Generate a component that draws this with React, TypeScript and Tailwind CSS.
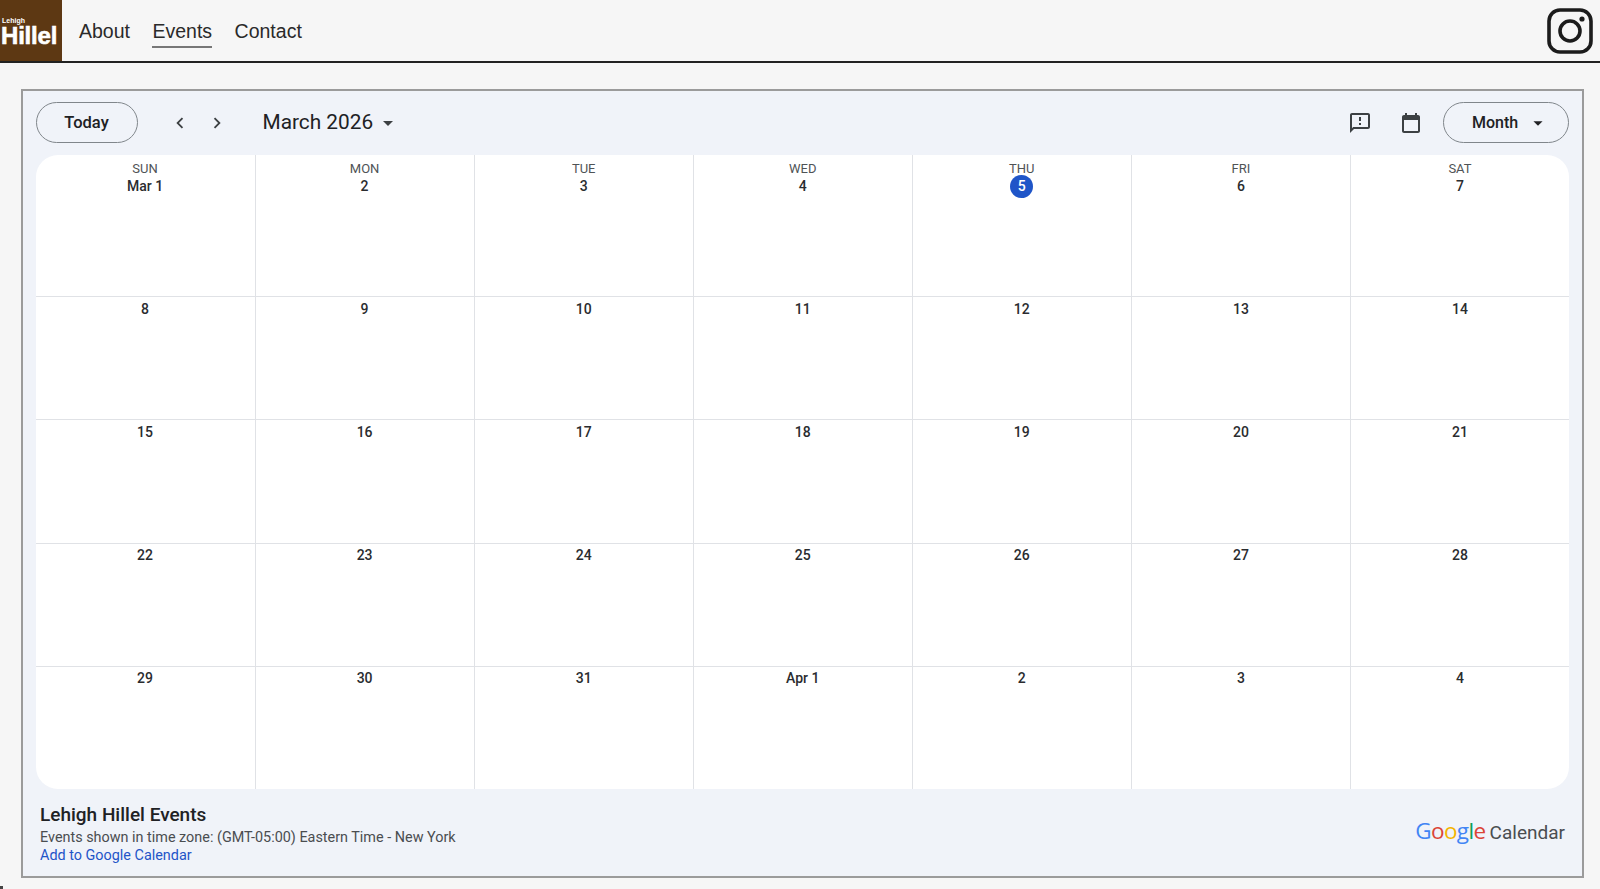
const sans = "font-['Roboto','Noto_Sans',sans-serif]";

const rows = [
  ["Mar 1", "2", "3", "4", "5", "6", "7"],
  ["8", "9", "10", "11", "12", "13", "14"],
  ["15", "16", "17", "18", "19", "20", "21"],
  ["22", "23", "24", "25", "26", "27", "28"],
  ["29", "30", "31", "Apr 1", "2", "3", "4"],
];
const weekdays = ["SUN", "MON", "TUE", "WED", "THU", "FRI", "SAT"];

function Caret({ className }: { className: string }) {
  return (
    <svg viewBox="0 0 24 24" className={className} fill="currentColor">
      <path d="M7 10l5 5 5-5z" />
    </svg>
  );
}

function Nav() {
  return (
    <header className="flex h-[63px] items-center border-b-2 border-[#222] bg-[#f6f6f6]">
      <div className="flex h-full w-[62px] flex-col justify-center bg-[#5d3813] pl-[1px] pt-[2px] font-['Liberation_Sans',sans-serif] font-bold text-white">
        <span className="pl-[1px] text-[7px] leading-[8px]">Lehigh</span>
        <span className="text-[24px] leading-[22px] tracking-[-0.2px] [-webkit-text-stroke:0.6px_white]">Hillel</span>
      </div>
      <nav className="ml-[17px] mt-[2px] flex gap-[22.5px] font-['Liberation_Sans',sans-serif] text-[19.5px] text-[#2a2a2a]">
        <a>About</a>
        <a className="relative">
          Events
          <span className="absolute -bottom-[2px] left-0 h-[2px] w-full bg-[#777]" />
        </a>
        <a>Contact</a>
      </nav>
      <svg viewBox="0 0 46 46" className="ml-auto mr-[7px] h-[46px] w-[46px] text-[#1c1c1c]" fill="none" stroke="currentColor">
        <rect x="2" y="2" width="42" height="42" rx="11" strokeWidth="3.6" />
        <circle cx="23" cy="23" r="10" strokeWidth="3.6" />
        <circle cx="35" cy="11" r="2.6" fill="currentColor" stroke="none" />
      </svg>
    </header>
  );
}

function Toolbar() {
  return (
    <div className="flex h-[41px] items-center text-[#3c4043]">
      <button className="h-[41px] w-[102px] rounded-full border border-[#80868b] pt-[1px] text-[16.5px] font-medium text-[#202124]">Today</button>
      <svg viewBox="0 0 24 24" className="ml-[31px] h-[22px] w-[22px]" fill="currentColor">
        <path d="M15.41 7.41L14 6l-6 6 6 6 1.41-1.41L10.83 12z" />
      </svg>
      <svg viewBox="0 0 24 24" className="ml-[15px] h-[22px] w-[22px]" fill="currentColor">
        <path d="M8.59 16.59L10 18l6-6-6-6-1.41 1.41L13.17 12z" />
      </svg>
      <span className="ml-[35px] text-[20.8px] text-[#202124]">March 2026</span>
      <Caret className="ml-[3px] h-[24px] w-[24px]" />
      <svg viewBox="0 0 24 24" className="ml-auto h-[24px] w-[24px]" fill="currentColor">
        <path d="M20 2H4c-1.1 0-1.99.9-1.99 2L2 22l4-4h14c1.1 0 2-.9 2-2V4c0-1.1-.9-2-2-2zm0 14H5.17L4 17.17V4h16v12zM11 12h2v2h-2zm0-6h2v4h-2z" />
      </svg>
      <svg viewBox="0 0 24 24" className="ml-[27px] h-[24px] w-[24px]" fill="currentColor">
        <path d="M19 4h-1V2h-2v2H8V2H6v2H5c-1.1 0-2 .9-2 2v14c0 1.1.9 2 2 2h14c1.1 0 2-.9 2-2V6c0-1.1-.9-2-2-2zm0 16H5V9h14v11z" />
      </svg>
      <button className="ml-[20px] flex h-[41px] w-[126px] items-center rounded-full border border-[#80868b] pl-[28px] text-[16px] font-medium text-[#202124]">
        Month
        <Caret className="ml-[9px] h-[22px] w-[22px]" />
      </button>
    </div>
  );
}

function Cell({ label, row, col }: { label: string; row: number; col: number }) {
  const today = row === 0 && col === 4;
  return (
    <div className={`flex flex-col items-center ${col > 0 ? "border-l border-[#e0e2e6]" : ""} ${row > 0 ? "border-t border-[#e0e2e6] pt-[2px]" : "pt-[6px]"}`}>
      {row === 0 && <span className="h-[15px] text-[13px] leading-[15px] text-[#4f5356]">{weekdays[col]}</span>}
      {today ? (
        <span className="-my-[1.5px] flex h-[23px] w-[23px] items-center justify-center rounded-full bg-[#1f55c8] text-[14px] font-medium text-white">{label}</span>
      ) : (
        <span className="flex h-[20px] items-center text-[14px] font-medium text-[#2a2c2f]">{label}</span>
      )}
    </div>
  );
}

function Grid() {
  return (
    <div className="mt-[12px] grid h-[634px] grid-cols-7 grid-rows-[141px_repeat(4,1fr)] rounded-[22px] bg-white">
      {rows.map((week, r) => week.map((label, c) => <Cell key={`${r}-${c}`} label={label} row={r} col={c} />))}
    </div>
  );
}

function Footer() {
  return (
    <div className="flex items-start justify-between pl-[4.5px] pr-[4px] pt-[14px]">
      <div>
        <div className="text-[19px] font-medium leading-[24px] text-[#202124]">Lehigh Hillel Events</div>
        <div className="mt-[2px] text-[14.4px] leading-[18px] text-[#4a4d50]">Events shown in time zone: (GMT-05:00) Eastern Time - New York</div>
        <a className="block text-[14.4px] leading-[18px] text-[#1f55c8]">Add to Google Calendar</a>
      </div>
      <div className="mt-[11px] flex items-baseline text-[19px] text-[#4a4d50]">
        <span className="font-['Open_Sans',sans-serif] text-[22.5px] font-medium tracking-[-0.6px]">
          <span className="text-[#4285f4]">G</span>
          <span className="text-[#db4437]">o</span>
          <span className="text-[#f4b400]">o</span>
          <span className="text-[#4285f4]">g</span>
          <span className="text-[#0f9d58]">l</span>
          <span className="text-[#db4437]">e</span>
        </span>
        <span className="ml-[4px]">Calendar</span>
      </div>
    </div>
  );
}

export default function App() {
  return (
    <div className={`relative h-[889px] overflow-hidden bg-[#f6f6f6] ${sans}`}>
      <Nav />
      <main className="pl-[20.5px] pt-[26px]">
        <section className="h-[789px] w-[1563.5px] border-2 border-[#9b9b9b] bg-[#f0f3f9] px-[13px] pt-[11px]">
          <Toolbar />
          <Grid />
          <Footer />
        </section>
      </main>
      <span className="absolute bottom-0 left-0 h-[3px] w-[3px] bg-[#444]" />
    </div>
  );
}
